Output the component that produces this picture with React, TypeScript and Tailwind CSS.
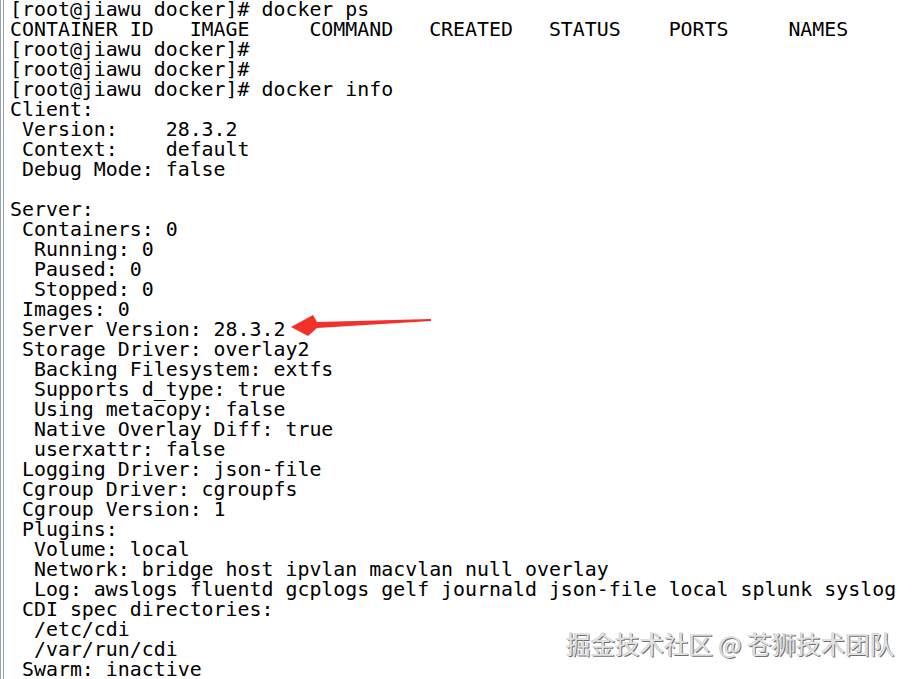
const lines = [
  '[root@jiawu docker]# docker ps',
  'CONTAINER ID   IMAGE     COMMAND   CREATED   STATUS    PORTS     NAMES',
  '[root@jiawu docker]#',
  '[root@jiawu docker]#',
  '[root@jiawu docker]# docker info',
  'Client:',
  ' Version:    28.3.2',
  ' Context:    default',
  ' Debug Mode: false',
  '',
  'Server:',
  ' Containers: 0',
  '  Running: 0',
  '  Paused: 0',
  '  Stopped: 0',
  ' Images: 0',
  ' Server Version: 28.3.2',
  ' Storage Driver: overlay2',
  '  Backing Filesystem: extfs',
  '  Supports d_type: true',
  '  Using metacopy: false',
  '  Native Overlay Diff: true',
  '  userxattr: false',
  ' Logging Driver: json-file',
  ' Cgroup Driver: cgroupfs',
  ' Cgroup Version: 1',
  ' Plugins:',
  '  Volume: local',
  '  Network: bridge host ipvlan macvlan null overlay',
  '  Log: awslogs fluentd gcplogs gelf journald json-file local splunk syslog',
  ' CDI spec directories:',
  '  /etc/cdi',
  '  /var/run/cdi',
  ' Swarm: inactive',
];

export default function App() {
  return (
    <div className="relative w-[922px] h-[679px] overflow-hidden bg-white">
      <div className="h-full border-l-[4px] border-double border-gray-400 pl-[6px]">
        <pre className="font-['DejaVu_Sans_Mono',monospace] text-[19.9px] leading-[20px] text-black">
          {lines.map((l, i) => (
            <div key={i} className="h-[20px] whitespace-pre">{l}</div>
          ))}
        </pre>
      </div>

      {/* red arrow pointing at server version */}
      <svg className="absolute left-0 top-0" width="922" height="679">
        <polygon
          points="291,327 313,315 317,322 431,319 431,321 317,328 308,336"
          fill="#f2312b"
        />
      </svg>

      <div className="absolute left-[566px] top-[629px] font-['Noto_Sans_CJK_SC',sans-serif] text-[24.5px] leading-[30px] text-[#e2e2e2] [text-shadow:1px_1px_0_#6f6f6f,-0.5px_-0.5px_0_#bbbbbb] whitespace-nowrap">
        掘金技术社区 @ 苍狮技术团队
      </div>
    </div>
  );
}
